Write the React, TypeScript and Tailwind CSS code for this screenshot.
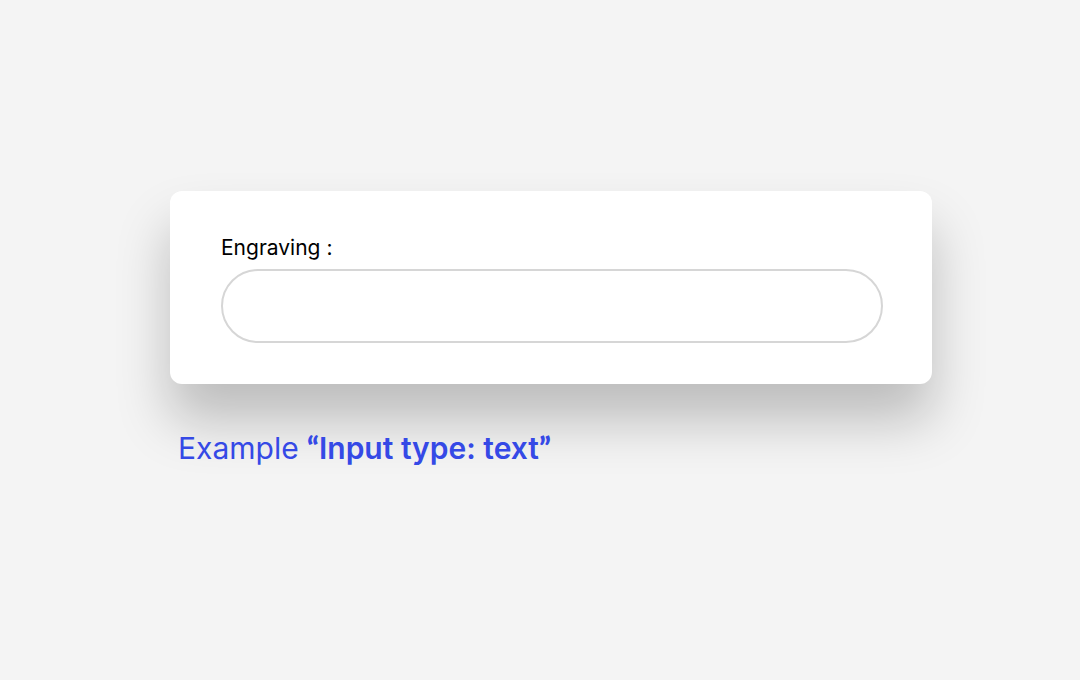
import { useState } from "react";

export default function App() {
  const [engraving, setEngraving] = useState("");

  return (
    <main className="min-h-screen bg-[#f4f4f4] pt-[191px] pl-[170px] pr-[148px] font-['Inter',sans-serif]">
      {/* Card with the field */}
      <section className="flex flex-col rounded-xl bg-white pt-[41px] pb-[41px] pl-[51px] pr-[49px] shadow-[0_36px_54px_0_rgba(0,0,0,0.23)]">
        <label
          htmlFor="engraving"
          className="text-[21px] leading-8 text-black"
        >
          Engraving :
        </label>
        <input
          id="engraving"
          type="text"
          value={engraving}
          onChange={(e) => setEngraving(e.target.value)}
          className="mt-[5px] h-[74px] w-full rounded-full border-2 border-[#d6d6d6] px-8 text-[21px] outline-none"
        />
      </section>

      {/* Caption */}
      <p className="mt-[43px] pl-2 text-[30px] leading-10 text-[#3549e6]">
        Example{" "}
        <span className="font-semibold">
          <span className="font-['Lato',sans-serif] font-black">“</span>
          Input type: text
          <span className="font-['Lato',sans-serif] font-black">”</span>
        </span>
      </p>
    </main>
  );
}
